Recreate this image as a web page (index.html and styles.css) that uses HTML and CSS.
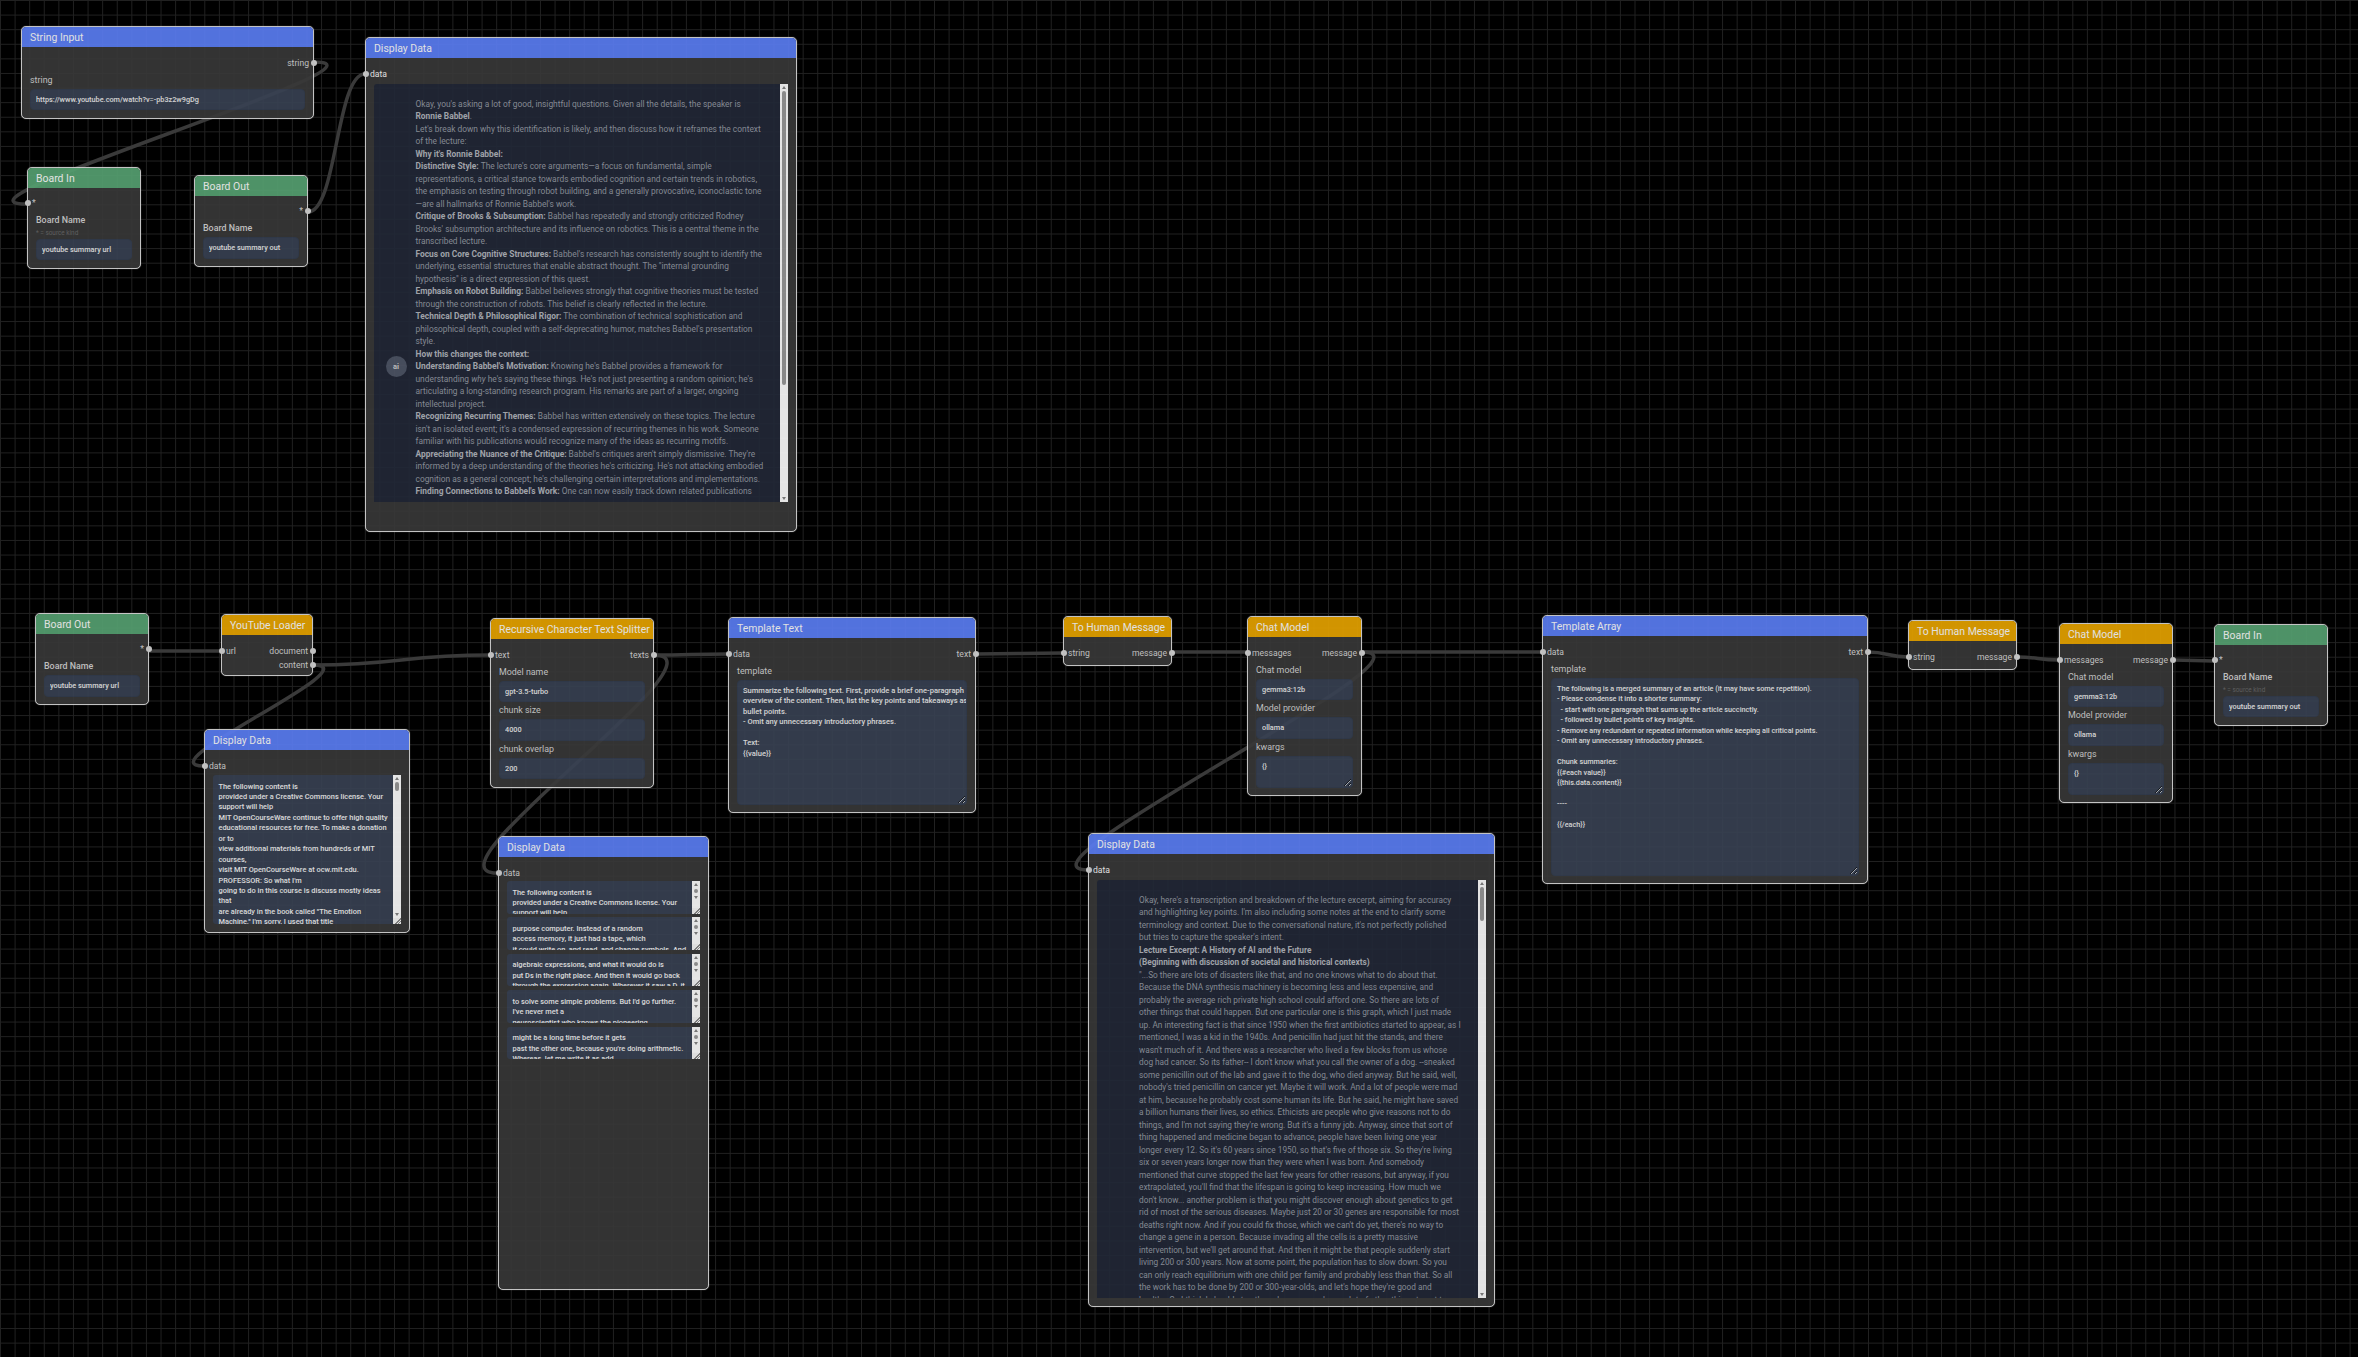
FILE: index.html
```html
<!doctype html>
<html lang="en">
<head>
    <meta charset="UTF-8">
    <title>Board editor</title>
    <link rel="stylesheet" href="styles.css">
</head>
<body>
<div class="canvas">

    <!-- edges sit under the nodes -->
    <svg class="edges" width="2358" height="1357" viewBox="0 0 2358 1357">
        <path d="M314,62 C411,62 -71,204 26,204"/>
        <path d="M308,212 C337,212 336,74 365,74"/>
        <path d="M149,651 L221,651"/>
        <path d="M313,665 C402,665 401,655 490,655"/>
        <path d="M313,665 C375,665 142,766 204,766"/>
        <path d="M654,655 C691,655 691,654 728,654"/>
        <path d="M654,655 C734,655 417,873 497,873"/>
        <path d="M976,654 C1020,654 1020,653 1063,653"/>
        <path d="M1172,652 L1247,652"/>
        <path d="M1362,652 L1542,652"/>
        <path d="M1362,652 C1452,652 998,870 1088,870"/>
        <path d="M1868,652 C1888,652 1888,657 1908,657"/>
        <path d="M2017,657 C2038,657 2038,660 2059,660"/>
        <path d="M2173,660 C2194,660 2194,661 2214,661"/>
    </svg>

    <!-- top group -->
    <section class="node node-string-input">
        <h3 class="node-title blue">String Input</h3>
        <div class="node-body">
            <div class="ports"><span></span><span>string<i class="handle out"></i></span></div>
            <label class="field-label">string</label>
            <input class="field" readonly value="https://www.youtube.com/watch?v=-pb3z2w9gDg">
        </div>
    </section>

    <section class="node board node-board-in-a">
        <h3 class="node-title green">Board In</h3>
        <div class="node-body">
            <div class="ports"><span><i class="handle in"></i>*</span></div>
            <label class="field-label strong">Board Name</label>
            <div class="hint">* = source kind</div>
            <input class="field" readonly value="youtube summary url">
        </div>
    </section>

    <section class="node board node-board-out-a">
        <h3 class="node-title green">Board Out</h3>
        <div class="node-body">
            <div class="ports"><span></span><span>*<i class="handle out"></i></span></div>
            <label class="field-label strong">Board Name</label>
            <input class="field" readonly value="youtube summary out">
        </div>
    </section>

    <section class="node display node-display-a">
        <h3 class="node-title blue">Display Data</h3>
        <div class="node-body">
            <div class="ports"><span class="bright"><i class="handle in"></i>data</span></div>
            <div class="message">
                <div class="message-scroll">
                    <div class="avatar">ai</div>
                    <div class="message-text">
                        Okay, you's asking a lot of good, insightful questions. Given all the details, the speaker is<br>
                        <b>Ronnie Babbel</b>.<br>
                        Let's break down why this identification is likely, and then discuss how it reframes the context<br>
                        of the lecture:<br>
                        <b>Why it's Ronnie Babbel:</b><br>
                        <b>Distinctive Style:</b> The lecture's core arguments—a focus on fundamental, simple<br>
                        representations, a critical stance towards embodied cognition and certain trends in robotics,<br>
                        the emphasis on testing through robot building, and a generally provocative, iconoclastic tone<br>
                        —are all hallmarks of Ronnie Babbel's work.<br>
                        <b>Critique of Brooks &amp; Subsumption:</b> Babbel has repeatedly and strongly criticized Rodney<br>
                        Brooks' subsumption architecture and its influence on robotics. This is a central theme in the<br>
                        transcribed lecture.<br>
                        <b>Focus on Core Cognitive Structures:</b> Babbel's research has consistently sought to identify the<br>
                        underlying, essential structures that enable abstract thought. The "internal grounding<br>
                        hypothesis" is a direct expression of this quest.<br>
                        <b>Emphasis on Robot Building:</b> Babbel believes strongly that cognitive theories must be tested<br>
                        through the construction of robots. This belief is clearly reflected in the lecture.<br>
                        <b>Technical Depth &amp; Philosophical Rigor:</b> The combination of technical sophistication and<br>
                        philosophical depth, coupled with a self-deprecating humor, matches Babbel's presentation<br>
                        style.<br>
                        <b>How this changes the context:</b><br>
                        <b>Understanding Babbel's Motivation:</b> Knowing he's Babbel provides a framework for<br>
                        understanding <em>why</em> he's saying these things. He's not just presenting a random opinion; he's<br>
                        articulating a long-standing research program. His remarks are part of a larger, ongoing<br>
                        intellectual project.<br>
                        <b>Recognizing Recurring Themes:</b> Babbel has written extensively on these topics. The lecture<br>
                        isn't an isolated event; it's a condensed expression of recurring themes in his work. Someone<br>
                        familiar with his publications would recognize many of the ideas as recurring motifs.<br>
                        <b>Appreciating the Nuance of the Critique:</b> Babbel's critiques aren't simply dismissive. They're<br>
                        informed by a deep understanding of the theories he's criticizing. He's not attacking embodied<br>
                        cognition as a general concept; he's challenging certain interpretations and implementations.<br>
                        <b>Finding Connections to Babbel's Work:</b> One can now easily track down related publications
                    </div>
                </div>
                <div class="scrollbar">
                    <span class="arrow-up"></span>
                    <span class="thumb thumb-long"></span>
                    <span class="fill"></span>
                    <span class="arrow-down"></span>
                </div>
            </div>
        </div>
    </section>

    <!-- main chain -->
    <section class="node board node-board-out-b">
        <h3 class="node-title green">Board Out</h3>
        <div class="node-body">
            <div class="ports"><span></span><span>*<i class="handle out"></i></span></div>
            <label class="field-label strong">Board Name</label>
            <input class="field" readonly value="youtube summary url">
        </div>
    </section>

    <section class="node node-loader">
        <h3 class="node-title orange">YouTube Loader</h3>
        <div class="node-body compact">
            <div class="ports tight"><span><i class="handle in"></i>url</span><span>document<i class="handle out"></i></span></div>
            <div class="ports tight"><span></span><span>content<i class="handle out"></i></span></div>
        </div>
    </section>

    <section class="node display node-display-b">
        <h3 class="node-title blue">Display Data</h3>
        <div class="node-body">
            <div class="ports"><span><i class="handle in"></i>data</span></div>
            <div class="chunk chunk-tall">
                <div class="chunk-text">
                    The following content is<br>
                    provided under a Creative Commons license. Your<br>
                    support will help<br>
                    MIT OpenCourseWare continue to offer high quality<br>
                    educational resources for free. To make a donation<br>
                    or to<br>
                    view additional materials from hundreds of MIT<br>
                    courses,<br>
                    visit MIT OpenCourseWare at ocw.mit.edu.<br>
                    PROFESSOR: So what I'm<br>
                    going to do in this course is discuss mostly ideas<br>
                    that<br>
                    are already in the book called "The Emotion<br>
                    Machine." I'm sorry, I used that title
                </div>
                <div class="scrollbar">
                    <span class="arrow-up"></span>
                    <span class="thumb thumb-short"></span>
                    <span class="fill"></span>
                    <span class="arrow-down"></span>
                    <span class="corner"></span>
                </div>
            </div>
        </div>
    </section>

    <section class="node node-splitter">
        <h3 class="node-title orange">Recursive Character Text Splitter</h3>
        <div class="node-body">
            <div class="ports"><span><i class="handle in"></i>text</span><span>texts<i class="handle out"></i></span></div>
            <label class="field-label">Model name</label>
            <input class="field" readonly value="gpt-3.5-turbo">
            <label class="field-label">chunk size</label>
            <input class="field" readonly value="4000">
            <label class="field-label">chunk overlap</label>
            <input class="field" readonly value="200">
        </div>
    </section>

    <section class="node display node-display-c">
        <h3 class="node-title blue">Display Data</h3>
        <div class="node-body">
            <div class="ports"><span><i class="handle in"></i>data</span></div>
            <div class="chunk-list">
                <div class="chunk">
                    <div class="chunk-text">
                        The following content is<br>
                        provided under a Creative Commons license. Your<br>
                        support will help
                    </div>
                    <div class="scrollbar">
                        <span class="arrow-up"></span><span class="dot"></span><span class="arrow-down"></span><span class="fill"></span><span class="corner"></span>
                    </div>
                </div>
                <div class="chunk">
                    <div class="chunk-text">
                        purpose computer. Instead of a random<br>
                        access memory, it just had a tape, which<br>
                        it could write on, and read, and change symbols. And
                    </div>
                    <div class="scrollbar">
                        <span class="arrow-up"></span><span class="dot"></span><span class="arrow-down"></span><span class="fill"></span><span class="corner"></span>
                    </div>
                </div>
                <div class="chunk">
                    <div class="chunk-text">
                        algebraic expressions, and what it would do is<br>
                        put Ds in the right place. And then it would go back<br>
                        through the expression again. Wherever it saw a D, it
                    </div>
                    <div class="scrollbar">
                        <span class="arrow-up"></span><span class="dot"></span><span class="arrow-down"></span><span class="fill"></span><span class="corner"></span>
                    </div>
                </div>
                <div class="chunk">
                    <div class="chunk-text">
                        to solve some simple problems. But I'd go further.<br>
                        I've never met a<br>
                        neuroscientist who knows the pioneering
                    </div>
                    <div class="scrollbar">
                        <span class="arrow-up"></span><span class="dot"></span><span class="arrow-down"></span><span class="fill"></span><span class="corner"></span>
                    </div>
                </div>
                <div class="chunk">
                    <div class="chunk-text">
                        might be a long time before it gets<br>
                        past the other one, because you're doing arithmetic.<br>
                        Whereas, let me write it as add
                    </div>
                    <div class="scrollbar">
                        <span class="arrow-up"></span><span class="dot"></span><span class="arrow-down"></span><span class="fill"></span><span class="corner"></span>
                    </div>
                </div>
            </div>
        </div>
    </section>

    <section class="node node-template-text">
        <h3 class="node-title blue">Template Text</h3>
        <div class="node-body">
            <div class="ports"><span><i class="handle in"></i>data</span><span>text<i class="handle out"></i></span></div>
            <label class="field-label">template</label>
            <textarea class="field area area-text" readonly wrap="off">Summarize the following text. First, provide a brief one-paragraph
overview of the content. Then, list the key points and takeaways as
bullet points.
- Omit any unnecessary introductory phrases.

Text:
{{value}}</textarea>
        </div>
    </section>

    <section class="node node-human-a">
        <h3 class="node-title orange">To Human Message</h3>
        <div class="node-body compact">
            <div class="ports"><span><i class="handle in"></i>string</span><span>message<i class="handle out"></i></span></div>
        </div>
    </section>

    <section class="node node-chat-a">
        <h3 class="node-title orange">Chat Model</h3>
        <div class="node-body">
            <div class="ports"><span><i class="handle in"></i>messages</span><span>message<i class="handle out"></i></span></div>
            <label class="field-label">Chat model</label>
            <input class="field" readonly value="gemma3:12b">
            <label class="field-label">Model provider</label>
            <input class="field" readonly value="ollama">
            <label class="field-label">kwargs</label>
            <textarea class="field area area-kwargs" readonly wrap="off">{}</textarea>
        </div>
    </section>

    <section class="node display node-display-d">
        <h3 class="node-title blue">Display Data</h3>
        <div class="node-body">
            <div class="ports"><span class="bright"><i class="handle in"></i>data</span></div>
            <div class="message">
                <div class="message-scroll">
                    <div class="message-text">
                        Okay, here's a transcription and breakdown of the lecture excerpt, aiming for accuracy<br>
                        and highlighting key points. I'm also including some notes at the end to clarify some<br>
                        terminology and context. Due to the conversational nature, it's not perfectly polished<br>
                        but tries to capture the speaker's intent.<br>
                        <b>Lecture Excerpt: A History of AI and the Future</b><br>
                        <b>(Beginning with discussion of societal and historical contexts)</b><br>
                        "...So there are lots of disasters like that, and no one knows what to do about that.<br>
                        Because the DNA synthesis machinery is becoming less and less expensive, and<br>
                        probably the average rich private high school could afford one. So there are lots of<br>
                        other things that could happen. But one particular one is this graph, which I just made<br>
                        up. An interesting fact is that since 1950 when the first antibiotics started to appear, as I<br>
                        mentioned, I was a kid in the 1940s. And penicillin had just hit the stands, and there<br>
                        wasn't much of it. And there was a researcher who lived a few blocks from us whose<br>
                        dog had cancer. So its father-- I don't know what you call the owner of a dog. --sneaked<br>
                        some penicillin out of the lab and gave it to the dog, who died anyway. But he said, well,<br>
                        nobody's tried penicillin on cancer yet. Maybe it will work. And a lot of people were mad<br>
                        at him, because he probably cost some human its life. But he said, he might have saved<br>
                        a billion humans their lives, so ethics. Ethicists are people who give reasons not to do<br>
                        things, and I'm not saying they're wrong. But it's a funny job. Anyway, since that sort of<br>
                        thing happened and medicine began to advance, people have been living one year<br>
                        longer every 12. So it's 60 years since 1950, so that's five of those six. So they're living<br>
                        six or seven years longer now than they were when I was born. And somebody<br>
                        mentioned that curve stopped the last few years for other reasons, but anyway, if you<br>
                        extrapolated, you'll find that the lifespan is going to keep increasing. How much we<br>
                        don't know... another problem is that you might discover enough about genetics to get<br>
                        rid of most of the serious diseases. Maybe just 20 or 30 genes are responsible for most<br>
                        deaths right now. And if you could fix those, which we can't do yet, there's no way to<br>
                        change a gene in a person. Because invading all the cells is a pretty massive<br>
                        intervention, but we'll get around that. And then it might be that people suddenly start<br>
                        living 200 or 300 years. Now at some point, the population has to slow down. So you<br>
                        can only reach equilibrium with one child per family and probably less than that. So all<br>
                        the work has to be done by 200 or 300-year-olds, and let's hope they're good and<br>
                        healthy. So I think I should stop there, because we have a lot of other things to get to
                    </div>
                </div>
                <div class="scrollbar">
                    <span class="arrow-up"></span>
                    <span class="thumb thumb-mid"></span>
                    <span class="fill"></span>
                    <span class="arrow-down"></span>
                </div>
            </div>
        </div>
    </section>

    <section class="node node-template-array">
        <h3 class="node-title blue">Template Array</h3>
        <div class="node-body">
            <div class="ports"><span><i class="handle in"></i>data</span><span>text<i class="handle out"></i></span></div>
            <label class="field-label">template</label>
            <textarea class="field area area-array" readonly wrap="off">The following is a merged summary of an article (it may have some repetition).
- Please condense it into a shorter summary:
  - start with one paragraph that sums up the article succinctly.
  - followed by bullet points of key insights.
- Remove any redundant or repeated information while keeping all critical points.
- Omit any unnecessary introductory phrases.

Chunk summaries:
{{#each value}}
{{this.data.content}}

----

{{/each}}</textarea>
        </div>
    </section>

    <section class="node node-human-b">
        <h3 class="node-title orange">To Human Message</h3>
        <div class="node-body compact">
            <div class="ports"><span><i class="handle in"></i>string</span><span>message<i class="handle out"></i></span></div>
        </div>
    </section>

    <section class="node node-chat-b">
        <h3 class="node-title orange">Chat Model</h3>
        <div class="node-body">
            <div class="ports"><span><i class="handle in"></i>messages</span><span>message<i class="handle out"></i></span></div>
            <label class="field-label">Chat model</label>
            <input class="field" readonly value="gemma3:12b">
            <label class="field-label">Model provider</label>
            <input class="field" readonly value="ollama">
            <label class="field-label">kwargs</label>
            <textarea class="field area area-kwargs" readonly wrap="off">{}</textarea>
        </div>
    </section>

    <section class="node board node-board-in-b">
        <h3 class="node-title green">Board In</h3>
        <div class="node-body">
            <div class="ports"><span><i class="handle in"></i>*</span></div>
            <label class="field-label strong">Board Name</label>
            <div class="hint">* = source kind</div>
            <input class="field" readonly value="youtube summary out">
        </div>
    </section>

</div>
</body>
</html>
```
FILE: styles.css
```css
* {
    box-sizing: border-box;
}
html, body {
    margin: 0;
    background: #000;
}
body {
    font-family: Roboto, "Noto Sans", sans-serif;
    color: #d0d0d0;
    overflow: hidden;
}

/* canvas + grid */
.canvas {
    position: relative;
    width: 2358px;
    height: 1357px;
    overflow: hidden;
    background-color: #000;
    background-image:
        linear-gradient(to right, #212121 1px, transparent 1px),
        linear-gradient(to bottom, #212121 1px, transparent 1px);
    background-size: 14.6px 14.6px;
}
.edges {
    position: absolute;
    left: 0;
    top: 0;
}
.edges path {
    fill: none;
    stroke: #3a3a3a;
    stroke-width: 3.5;
}

/* nodes */
.node {
    position: absolute;
    background: #383838;
    border: 1px solid #d4d4d4;
    border-radius: 5px;
    box-shadow: 0 0 1px #999;
    opacity: .92;
}
.node-title {
    margin: 0;
    height: 20px;
    padding: 0 8px;
    font-size: 10.45px;
    font-weight: 400;
    line-height: 21px;
    color: #f4f4f4;
    white-space: nowrap;
    border-radius: 4px 4px 0 0;
}
.blue { background: #5a7cf0; }
.green { background: #559f70; }
.orange { background: #e3a100; }

.node-body {
    padding: 10px 8px 7.5px;
}
.node-body.compact {
    padding-bottom: 3px;
}
.ports {
    display: flex;
    justify-content: space-between;
    height: 12px;
    margin: 0 -8px 2.5px;
    padding: 0 4px;
    font-size: 8.6px;
    line-height: 12px;
    color: #cfcfcf;
}
.ports.tight {
    margin-bottom: 1.5px;
}
.ports .bright {
    color: #f2f2f2;
}
.handle {
    position: absolute;
    width: 6px;
    height: 6px;
    margin-top: 3px;
    border-radius: 50%;
    background: #d0d0d0;
}
.handle.in { left: -3.5px; }
.handle.out { right: -3.5px; }

.field-label {
    display: block;
    height: 17px;
    font-size: 8.9px;
    line-height: 17px;
    color: #cecece;
    white-space: nowrap;
}
.field-label.strong {
    font-weight: 500;
}
.hint {
    height: 9.5px;
    font-size: 6.4px;
    line-height: 9px;
    color: #666;
}
.field {
    display: block;
    width: 100%;
    height: 21.5px;
    padding: 0 5px;
    background: #384152;
    border: 1px solid #343d4f;
    border-radius: 4px;
    outline: none;
    font-family: inherit;
    font-size: 7.3px;
    font-weight: 500;
    color: #e4e4e4;
}
.area {
    padding-top: 5.5px;
    line-height: 10.46px;
    resize: both;
    overflow: hidden;
    white-space: pre;
}
.area-text { height: 125px; font-size: 7.55px; }
.area-array { height: 198px; font-size: 7.25px; }
.area-kwargs { height: 32px; }

/* board nodes have a slightly tighter row */
.board .node-body {
    padding-top: 9px;
}
.board .ports {
    margin-bottom: 3px;
}

/* display nodes */
.display .ports {
    margin-bottom: 4px;
}
.message {
    display: flex;
    background: #222837;
    border-radius: 3px 0 0 0;
    overflow: hidden;
}
.message-scroll {
    display: flex;
    flex: 1;
    min-width: 0;
    overflow: hidden;
}
.avatar {
    flex: none;
    width: 21px;
    height: 21px;
    margin: 271.5px 9px 0 11.5px;
    border-radius: 50%;
    background: #4d5464;
    font-size: 7.5px;
    font-weight: 700;
    line-height: 21px;
    text-align: center;
    color: #c8c8c8;
}
.message-text {
    padding-top: 13.5px;
    font-size: 8.4px;
    line-height: 12.5px;
    color: #90959f;
    white-space: nowrap;
}
.message-text b {
    font-weight: 700;
    color: #adb0b7;
}
.scrollbar {
    display: flex;
    flex: none;
    flex-direction: column;
    align-items: center;
    width: 8px;
    background: #f8f8f8;
}
.arrow-up, .arrow-down {
    flex: none;
    width: 0;
    height: 0;
    margin: 2px 0;
    border-left: 2.5px solid transparent;
    border-right: 2.5px solid transparent;
}
.arrow-up { border-bottom: 3px solid #808080; }
.arrow-down { border-top: 3px solid #808080; }
.thumb {
    flex: none;
    width: 4px;
    background: #959595;
    border-radius: 2px;
}
.dot {
    flex: none;
    width: 4px;
    height: 4px;
    margin: 1px 0;
    border-radius: 50%;
    background: #959595;
}
.fill {
    flex: 1;
}
.corner {
    flex: none;
    width: 8px;
    height: 6px;
    background: linear-gradient(135deg, #f0f0f0 55%, #888 55%, #888 65%, #f0f0f0 65%, #f0f0f0 75%, #888 75%, #888 85%, #f0f0f0 85%);
}
.thumb-long { height: 294px; }
.thumb-mid { height: 34px; }
.thumb-short { height: 9px; }

.chunk {
    display: flex;
    height: 32.5px;
    background: #384152;
    border-radius: 3px 0 0 3px;
    overflow: hidden;
}
.chunk-tall {
    height: 149px;
}
.chunk-text {
    flex: 1;
    min-width: 0;
    padding: 6.5px 0 0 5.5px;
    font-size: 7.4px;
    font-weight: 500;
    line-height: 10.45px;
    color: #ececec;
    white-space: nowrap;
    overflow: hidden;
}
.chunk-list {
    display: flex;
    flex-direction: column;
    gap: 3.9px;
}

/* node positions on the board */
.node-string-input { left: 21px; top: 26px; width: 293px; }
.node-board-in-a { left: 27px; top: 167px; width: 114px; }
.node-board-out-a { left: 194px; top: 175px; width: 114px; }
.node-display-a { left: 365px; top: 37px; width: 432px; height: 495px; }
.node-display-a .message { height: 418px; }
.node-board-out-b { left: 35px; top: 613px; width: 114px; }
.node-loader { left: 221px; top: 614px; width: 92px; }
.node-display-b { left: 204px; top: 729px; width: 206px; }
.node-display-b .ports { margin-bottom: 3px; }
.node-splitter { left: 490px; top: 618px; width: 164px; }
.node-display-c { left: 498px; top: 836px; width: 211px; height: 454px; }
.node-display-c .ports { margin-bottom: 2px; }
.node-template-text { left: 728px; top: 617px; width: 248px; }
.node-human-a { left: 1063px; top: 616px; width: 109px; }
.node-chat-a { left: 1247px; top: 616px; width: 115px; }
.node-display-d { left: 1088px; top: 833px; width: 407px; }
.node-display-d .message { height: 418px; }
.node-display-d .message-text { padding-left: 42px; font-size: 8.27px; }
.node-template-array { left: 1542px; top: 615px; width: 326px; }
.node-human-b { left: 1908px; top: 620px; width: 109px; }
.node-chat-b { left: 2059px; top: 623px; width: 114px; }
.node-board-in-b { left: 2214px; top: 624px; width: 114px; }
```
